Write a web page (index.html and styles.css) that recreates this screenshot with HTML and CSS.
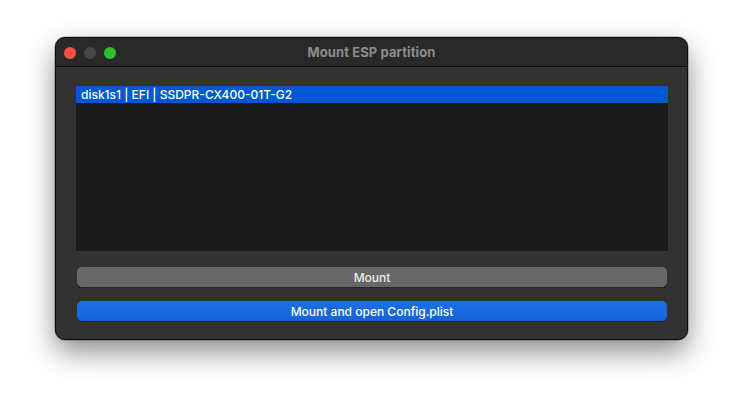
FILE: index.html
```html
<!DOCTYPE html>
<html>
<head>
<meta charset="utf-8">
<link rel="stylesheet" href="styles.css">
</head>
<body>
<div class="window">
  <div class="titlebar">
    <div class="lights">
      <span class="light red"></span>
      <span class="light grey"></span>
      <span class="light green"></span>
    </div>
    <div class="title">Mount ESP partition</div>
  </div>
  <div class="content">
    <div class="list">
      <div class="row selected">disk1s1 | EFI | SSDPR-CX400-01T-G2</div>
    </div>
    <button class="btn grey-btn">Mount</button>
    <button class="btn blue-btn">Mount and open Config.plist</button>
  </div>
</div>
</body>
</html>
```
FILE: styles.css
```css
html, body {
  margin: 0;
  padding: 0;
  background: #ffffff;
  width: 744px;
  height: 414px;
  overflow: hidden;
}
body {
  padding: 37px 0 0 55px;
  box-sizing: border-box;
  font-family: Inter, "Liberation Sans", sans-serif;
}
.window {
  width: 633px;
  height: 303px;
  box-sizing: border-box;
  background: #323232;
  border: 1px solid #0c0c0c;
  border-radius: 10px;
  box-shadow: 0 12px 28px rgba(0,0,0,0.45), 0 0 0 0.5px rgba(0,0,0,0.4);
  overflow: hidden;
  display: flex;
  flex-direction: column;
}
.titlebar {
  height: 28px;
  flex: none;
  background: #292929;
  border-bottom: 1px solid #0e0e0e;
  position: relative;
  display: flex;
  align-items: center;
  justify-content: center;
}
.lights {
  position: absolute;
  left: 8px;
  top: 9px;
  display: flex;
  gap: 8px;
}
.light {
  width: 12px;
  height: 12px;
  border-radius: 50%;
  display: block;
}
.red { background: #fe4f4b; }
.grey { background: #464646; }
.green { background: #2fc22f; }
.title {
  color: #8d8d8d;
  font-weight: 700;
  font-size: 13px;
  letter-spacing: 0.1px;
}
.content {
  padding: 19px 19px 0 20px;
  display: flex;
  flex-direction: column;
}
.list {
  height: 165px;
  background: #1b1b1b;
  box-sizing: border-box;
}
.row {
  height: 17px;
  line-height: 17px;
  font-size: 12px;
  font-weight: 500;
  color: #ffffff;
  padding-left: 5px;
}
.selected { background: #0058d0; }
.btn {
  display: block;
  margin: 0 1px;
  height: 20px;
  border: none;
  border-radius: 5px;
  font-family: Inter, "Liberation Sans", sans-serif;
  font-size: 12px;
  font-weight: 500;
  color: #ececec;
  padding: 0;
}
.grey-btn {
  margin-top: 16px;
  background: #676767;
  box-shadow: 0 1px 0 rgba(0,0,0,0.25);
}
.blue-btn {
  margin-top: 14px;
  background: linear-gradient(#1a6fe7, #1763d6);
  color: #ffffff;
  box-shadow: 0 1px 0 rgba(0,0,0,0.25);
}
```
